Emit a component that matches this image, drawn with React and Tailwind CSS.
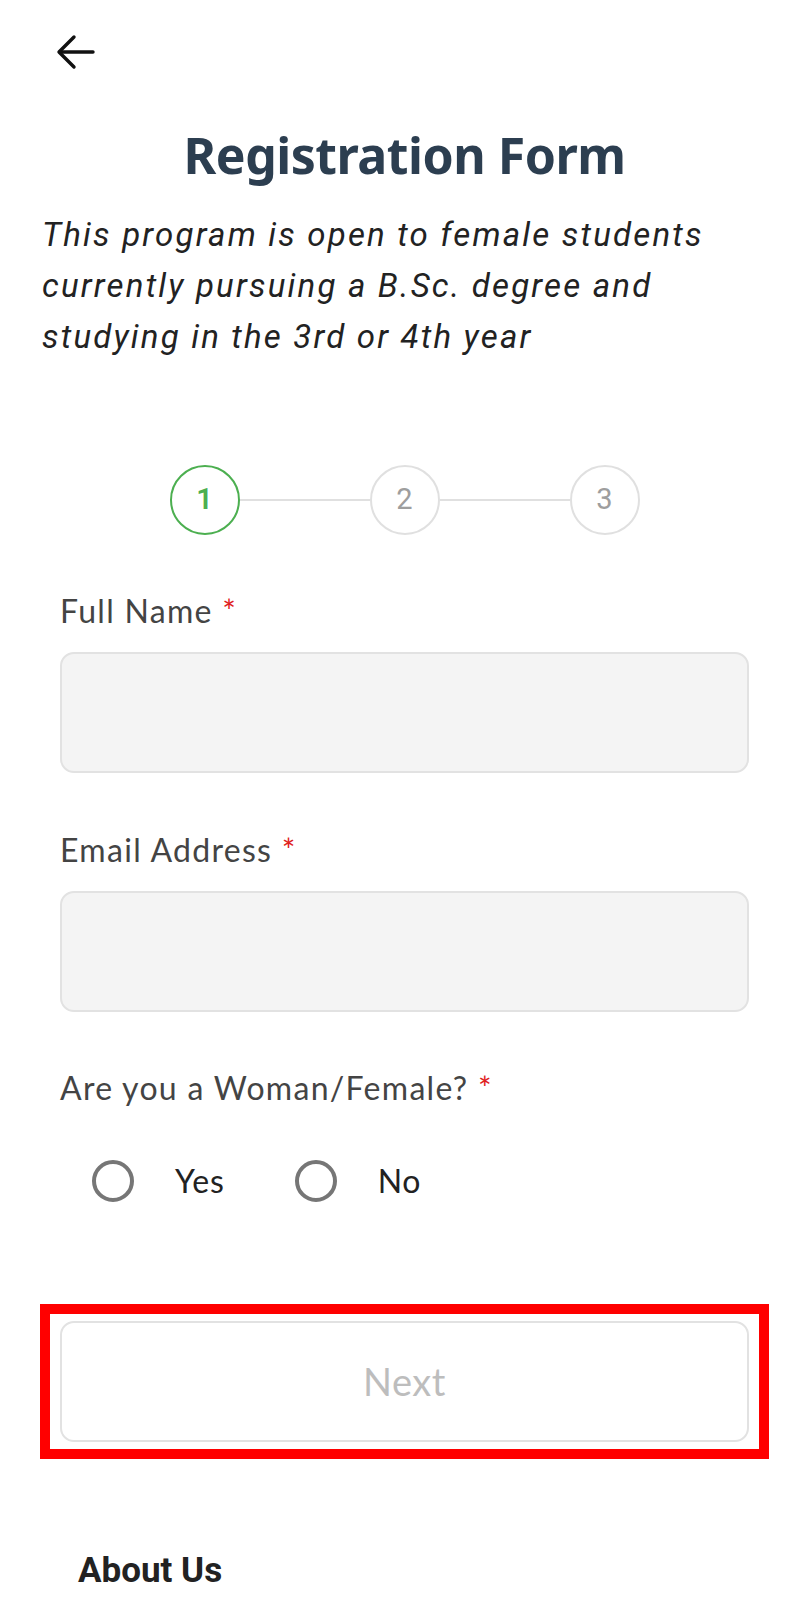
import React, { useState } from 'react';

const labelFont = { fontFamily: 'Lato, "Open Sans", sans-serif' };

const Step = ({ n, active }) => (
  <div
    className={`w-[70px] h-[70px] rounded-full flex items-center justify-center text-[29px] shrink-0 border-2 ${
      active ? 'border-[#4caf50] text-[#4caf50] font-semibold' : 'border-[#e0e0e0] text-[#9e9e9e]'
    }`}
    style={{ fontFamily: 'Roboto, sans-serif' }}
  >
    {n}
  </div>
);

const Field = ({ label }) => (
  <div className="flex flex-col">
    <label className="text-[32px] tracking-[1.3px] text-[#444] leading-none mb-[25px]" style={labelFont}>
      {label} <span className="text-[#e02020]">*</span>
    </label>
    <div className="h-[121px] rounded-[14px] bg-[#f4f4f4] border-2 border-[#e2e2e2]" />
  </div>
);

const Radio = ({ label, checked, onClick }) => (
  <button type="button" onClick={onClick} className="flex items-center gap-[41px]">
    <span className="w-[42px] h-[42px] rounded-full border-[4px] border-[#767676] flex items-center justify-center">
      {checked && <span className="w-[20px] h-[20px] rounded-full bg-[#4caf50]" />}
    </span>
    <span className="text-[32px] tracking-[0.8px] text-[#222] leading-none" style={labelFont}>{label}</span>
  </button>
);

const App = () => {
  const [answer, setAnswer] = useState(null);

  return (
    <div className="w-[809px] min-h-[1600px] bg-white overflow-hidden">
      <div className="pt-[34px] pl-[56px] h-[70px]">
        <svg width="40" height="36" viewBox="0 0 40 36" fill="none" stroke="#111" strokeWidth="3.4" strokeLinecap="round" strokeLinejoin="round">
          <path d="M37 18H4" />
          <path d="M18 3L3 18l15 15" />
        </svg>
      </div>

      <h1
        className="text-center text-[50px] tracking-[-0.5px] font-bold text-[#2c3e50] mt-[60px] leading-none"
        style={{ fontFamily: '"Noto Sans", Roboto, sans-serif' }}
      >
        Registration Form
      </h1>

      <p
        className="italic text-[33px] leading-[51px] text-[#222] pl-[42px] pr-[60px] mt-[29px] tracking-[2.2px]"
        style={{ fontFamily: 'Roboto, sans-serif' }}
      >
        This program is open to female students currently pursuing a B.Sc. degree and studying in the 3rd or 4th year
      </p>

      <div className="flex items-center justify-center mt-[103px]">
        <Step n="1" active />
        <div className="w-[130px] h-[2px] bg-[#e0e0e0]" />
        <Step n="2" />
        <div className="w-[130px] h-[2px] bg-[#e0e0e0]" />
        <Step n="3" />
      </div>

      <div className="px-[60px] mt-[60px] flex flex-col gap-[61px]">
        <Field label="Full Name" />
        <Field label="Email Address" />
      </div>

      <div className="px-[60px] mt-[60px]">
        <div className="text-[32px] tracking-[1.3px] text-[#444] leading-none" style={labelFont}>
          Are you a Woman/Female? <span className="text-[#e02020]">*</span>
        </div>
        <div className="flex items-center gap-[70px] pl-[32px] mt-[56px]">
          <Radio label="Yes" checked={answer === 'yes'} onClick={() => setAnswer('yes')} />
          <Radio label="No" checked={answer === 'no'} onClick={() => setAnswer('no')} />
        </div>
      </div>

      <div className="mx-[40px] mt-[102px] border-[10px] border-[#ff0000] px-[10px] py-[7px]">
        <button
          type="button"
          disabled
          className="w-full h-[121px] rounded-[14px] border-2 border-[#e2e2e2] bg-white text-[38px] tracking-[0.5px] text-[#bdbdbd]"
          style={labelFont}
        >
          Next
        </button>
      </div>

      <h2
        className="text-[35px] font-bold text-[#222] pl-[78px] mt-[94px] leading-none"
        style={{ fontFamily: 'Roboto, sans-serif' }}
      >
        About Us
      </h2>
    </div>
  );
};

export default App;
